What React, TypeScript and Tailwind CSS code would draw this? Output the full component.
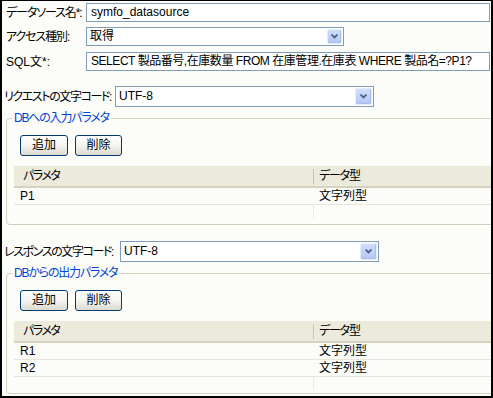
import React from "react"

const font = "font-['Liberation_Sans','Noto_Sans_CJK_JP',sans-serif] [font-feature-settings:'palt']"

function Arrow({ size }: { size: number }) {
  return (
    <span
      className={
        "flex items-center justify-center rounded-[2px] border border-[#e4ecfd] bg-linear-to-b from-[#d3defc] to-[#b2c6f5] shadow-[inset_-1px_-1px_0_#a9bde8] " +
        (size === 15 ? "w-[15px] h-[15px]" : "w-[17px] h-[17px]")
      }
    >
      <svg width="7" height="5" viewBox="0 0 7 5">
        <path d="M0.5 0.5 L3.5 3.5 L6.5 0.5" stroke="#4d6185" strokeWidth="1.8" fill="none" />
      </svg>
    </span>
  )
}

function Select({ value, className, small }: { value: string; className: string; small?: boolean }) {
  return (
    <div className={"flex shrink-0 bg-white border border-[#7f9db9] " + className}>
      <span className={"flex-1 pl-[3px] " + (small ? "leading-[15px] pt-[1px]" : "leading-[19px]")}>{value}</span>
      <span className="p-[1px]">
        <Arrow size={small ? 15 : 17} />
      </span>
    </div>
  )
}

function XpButton({ label, w }: { label: string; w: string }) {
  return (
    <button
      className={
        "h-[21px] rounded-[3px] border border-[#003c74] bg-linear-to-b from-white via-[#f4f4f0] to-[#dcdad0] text-[12px] leading-[19px] text-black " +
        w
      }
    >
      {label}
    </button>
  )
}

function ParamBox({ legend, rows, pb }: { legend: string; rows: string[]; pb: string }) {
  return (
    <fieldset className={"ml-[4px] mr-[-30px] rounded-[4px] border border-[#d0d0bf] pl-[7px] " + pb}>
      <legend className="ml-[-2px] px-[2px] leading-[14px] tracking-[-1.2px] whitespace-nowrap text-[#0046d5]">{legend}</legend>
      <div className="mt-[10px] ml-[6px] flex gap-[7px]">
        <XpButton label="追加" w="w-[48px]" />
        <XpButton label="削除" w="w-[47px]" />
      </div>
      <div className="mt-[10px] bg-[#fcfcf9]">
        <div className="flex h-[22px] items-center border-b-2 border-[#d6d2c2] bg-[#ebeadb]">
          <span className="w-[299px] pl-[9px] tracking-[-1.5px]">パラメタ</span>
          <span className="h-[15px] border-l border-[#c7c5b2]" />
          <span className="pl-[5px] tracking-[-1.2px]">データ型</span>
        </div>
        {rows.map((r) => (
          <div key={r} className="flex h-[17px] items-center border-b border-[#e8e6da]">
            <span className="w-[305px] pl-[6px]">{r}</span>
            <span>文字列型</span>
          </div>
        ))}
        <div className="flex h-[14px]">
          <span className="w-[299px]" />
          <span className="h-[13px] border-l border-[#eceae0]" />
        </div>
      </div>
    </fieldset>
  )
}

export default function App() {
  return (
    <div
      className={
        "w-[493px] h-[398px] overflow-hidden border-t border-x-2 border-b-2 border-black bg-[#fcfcf9] text-[12px] text-black " +
        font
      }
    >
      <div className="mt-[2px] flex h-[19px] items-center">
        <span className="w-[84px] shrink-0 whitespace-nowrap pl-[4px] tracking-[-1.1px]">データソース名*:</span>
        <div className="mr-[1px] h-[19px] flex-1 border border-[#7f9db9] bg-white pl-[4px] leading-[17px]">
          symfo_datasource
        </div>
      </div>
      <div className="mt-[5px] flex h-[19px] items-center">
        <span className="w-[84px] shrink-0 whitespace-nowrap pl-[4px] tracking-[-1.1px]">アクセス種別:</span>
        <Select value="取得" className="h-[19px] w-[258px]" small />
      </div>
      <div className="mt-[6px] flex h-[19px] items-center">
        <span className="w-[84px] shrink-0 whitespace-nowrap pl-[4px]">SQL文*:</span>
        <div className="mr-[1px] h-[19px] flex-1 overflow-hidden whitespace-nowrap border border-[#7f9db9] bg-white pl-[4px] leading-[17px] tracking-[-0.45px]">
          SELECT 製品番号,在庫数量 FROM 在庫管理.在庫表 WHERE 製品名=?P1?
        </div>
      </div>
      <div className="mt-[15px] flex h-[21px] items-center">
        <span className="w-[113px] shrink-0 whitespace-nowrap pl-[2px] tracking-[-1.4px]">リクエストの文字コード:</span>
        <Select value="UTF-8" className="h-[21px] w-[259px]" />
      </div>
      <div className="mt-[4px]">
        <ParamBox legend="DBへの入力パラメタ" rows={["P1"]} pb="pb-[5px]" />
      </div>
      <div className="mt-[16px] flex h-[21px] items-center">
        <span className="w-[118px] shrink-0 whitespace-nowrap pl-[2px] tracking-[-1.4px]">レスポンスの文字コード:</span>
        <Select value="UTF-8" className="h-[21px] w-[259px]" />
      </div>
      <div className="mt-[4px]">
        <ParamBox legend="DBからの出力パラメタ" rows={["R1", "R2"]} pb="pb-[2px]" />
      </div>
    </div>
  )
}
